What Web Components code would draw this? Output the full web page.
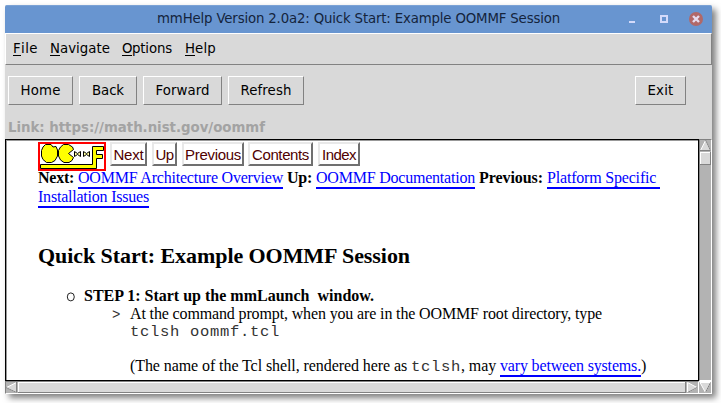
<!DOCTYPE html>
<html lang="en"><head><meta charset="utf-8"><title>mmHelp</title>
<style>html,body{height:403px}body{margin:0;background:#fff;overflow:hidden;display:flow-root}</style></head><body>
<help-window></help-window>
<script>
const define=(name,html,setup)=>customElements.define(name,class extends HTMLElement{
  connectedCallback(){
    if(this.shadowRoot)return;
    this.attachShadow({mode:'open'}).innerHTML=html;
    if(setup)setup(this,this.shadowRoot);
  }
});
// Single run of text spaced out to an exact advance width.
define('fit-text',`<style>:host{display:inline-block;white-space:pre;flex:none}</style><span><slot></slot></span>`,(el,root)=>{
  const w=+el.getAttribute('w'),s=root.querySelector('span');
  const n=el.textContent.length;
  if(n)s.style.letterSpacing=((w-s.getBoundingClientRect().width)/n)+'px';
  el.style.width=w+'px';
});
define('doc-link',`<style>:host{display:inline-block;color:#00f;height:18px;border-bottom:2px solid #00f;flex:none}</style><slot></slot>`);
define('tool-button',`<style>:host{box-sizing:border-box;display:flex;justify-content:center;height:29px;line-height:27px;border:1px solid;border-color:#fff #828282 #828282 #fff;flex:none}</style><slot></slot>`,el=>el.style.width=el.getAttribute('w')+'px');
define('nav-button',`<style>:host{box-sizing:border-box;display:flex;height:24px;font:15px/22px "Liberation Sans",Arial,sans-serif;color:#500000;border:2px solid;border-color:#e8e8e8 #707070 #707070 #e8e8e8;flex:none;justify-content:center}</style><slot></slot>`,el=>el.style.width=el.getAttribute('w')+'px');
define('oommf-logo',`<style>:host{display:block;width:68px;height:29px;flex:none;white-space:normal}svg{display:block}</style>
<svg width="68" height="29"><rect x="1" y="1" width="66" height="27" fill="#fff" stroke="#f00" stroke-width="2"/>
<g fill="#ff0" stroke="#000"><path d="M2.5 22.5H54.5V4.5H65.5V8.5H58.5V12.5H64.5V16.5H58.5V26.5H2.5Z"/>
<path d="M7.500 2.500H13L15 5L18 4.500L19.500 8V14L17 18.500L13.500 20.500H8.500L5 17.500L3.500 14V8.500L5 5Z"/>
<path d="M25.500 2.500H30.500L34.500 5L35.500 7.500L30.500 11.500L35.500 15.500L34 18.500L31 20.500H26L22.500 18L20.500 14V8.500L22.500 5Z"/>
<path fill="#ffffa0" d="M36.500 9.500L39.500 11.500L42.500 9.500V14.500L39.500 12.500L36.500 14.500ZM45.500 9.500L48.500 11.500L51.500 9.500V14.500L48.500 12.500L45.500 14.500Z"/></g></svg>`);
define('title-bar',`<style>:host{display:flex;height:28px;box-sizing:border-box;background:#6895d0;color:#14243c;padding-left:152px;line-height:25px;border-radius:2px 2px 0 0;border-top:1px solid #7ba2d5}svg{display:block;margin-left:67px}</style>
<fit-text w="403">mmHelp Version 2.0a2: Quick Start: Example OOMMF Session</fit-text>
<svg width="80" height="26"><path d="M2 15h6v2H2z" fill="#d3dafa"/><path d="M34 10h6v6h-6z" fill="none" stroke="#d3dafa" stroke-width="2"/><circle cx="69" cy="13" r="7" fill="#b16868"/><path d="M66 10l6 6M72 10l-6 6" stroke="#e6dcef" stroke-width="2.4"/></svg>`);
define('menu-bar',`<style>:host{display:flex;box-sizing:border-box;height:32px;gap:12px;padding:0 0 0 7px;line-height:30px;border:1px solid;border-color:#fff #828282 #828282 #fff}span{display:flex;flex:none}u{text-decoration:none;position:relative}u::after{content:"";position:absolute;left:0;right:0;top:21px;height:1px;background:#000}</style>
<span><u><fit-text w="8">F</fit-text></u><fit-text w="17">ile</fit-text></span>
<span><u><fit-text w="10">N</fit-text></u><fit-text w="50">avigate</fit-text></span>
<span><u><fit-text w="10">O</fit-text></u><fit-text w="40">ptions</fit-text></span>
<span style="margin-left:1px"><u><fit-text w="10">H</fit-text></u><fit-text w="21">elp</fit-text></span>`);
define('tool-bar',`<style>:host{display:flex;gap:6px;height:39px;padding:11px 26px 0 3px;box-sizing:border-box}.gap{flex:1}</style>
<tool-button w="65"><fit-text w="40">Home</fit-text></tool-button><tool-button w="58"><fit-text w="32">Back</fit-text></tool-button><tool-button w="79"><fit-text w="54">Forward</fit-text></tool-button><tool-button w="76"><fit-text w="51">Refresh</fit-text></tool-button><div class="gap"></div><tool-button w="51"><fit-text w="26">Exit</fit-text></tool-button>`);
define('link-status',`<style>:host{display:block;height:35px;box-sizing:border-box;padding:15px 0 0 3px;font-weight:bold;color:#a3a3a3;line-height:17px}</style><fit-text w="257">Link: https://math.nist.gov/oommf</fit-text>`);
define('help-page',`<style>
:host{display:block;box-sizing:border-box;background:#fff;border:1px solid #000;box-shadow:inset 1px 1px #999;padding:2px 0 0 32px;font:16px/18px "Liberation Serif","Times New Roman",serif;color:#000;overflow:hidden}
.r{display:flex;white-space:pre}.nav{align-items:flex-start}.nav oommf-logo{margin-right:4px}
h1{font-size:22px;line-height:26px;margin:36px 0 0;display:flex}
.l{height:19px;box-sizing:border-box}.tt{font-family:"Liberation Mono","Courier New",monospace;font-size:15.5px;color:#333}
ul{list-style:none;margin:0;padding:0}.step{padding:18px 0 0 28px}.body{padding-left:74px}
</style>
<div class="r nav"><oommf-logo></oommf-logo><nav-button w="37"><fit-text w="30">Next</fit-text></nav-button><nav-button w="25" style="margin-left:5px"><fit-text w="18">Up</fit-text></nav-button><nav-button w="62" style="margin-left:5px"><fit-text w="56">Previous</fit-text></nav-button><nav-button w="65" style="margin-left:4px"><fit-text w="57">Contents</fit-text></nav-button><nav-button w="42" style="margin-left:5px"><fit-text w="34">Index</fit-text></nav-button></div>
<div class="r l" style="margin-top:-2px"><b><fit-text w="40">Next: </fit-text></b><doc-link><fit-text w="205">OOMMF Architecture Overview</fit-text></doc-link><b style="margin-left:4px"><fit-text w="29">Up: </fit-text></b><doc-link><fit-text w="159">OOMMF Documentation</fit-text></doc-link><b style="margin-left:4px"><fit-text w="68">Previous: </fit-text></b><doc-link><fit-text w="113">Platform Specific </fit-text></doc-link></div>
<div class="r l"><doc-link><fit-text w="111">Installation Issues</fit-text></doc-link></div>
<h1><fit-text w="372">Quick Start: Example OOMMF Session</fit-text></h1>
<ul><li class="r step"><fit-text w="18"><svg width="9" height="10" style="display:block;margin-top:5px"><ellipse cx="4.8" cy="4.900" rx="3.500" ry="4" fill="none" stroke="#222"/></svg></fit-text><b><fit-text w="290">STEP 1: Start up the mmLaunch  window.</fit-text></b></li>
<li class="r body" style="align-items:baseline"><fit-text class="tt" w="18" style="font-size:14px">&gt;</fit-text><fit-text w="472">At the command prompt, when you are in the OOMMF root directory, type</fit-text></li>
<li class="r tt" style="padding-left:92px;height:17px;line-height:16px"><fit-text w="150">tclsh oommf.tcl</fit-text></li>
<li class="r" style="padding:16px 0 0 92px;align-items:baseline"><fit-text w="281">(The name of the Tcl shell, rendered here as </fit-text><fit-text class="tt" w="50">tclsh</fit-text><fit-text w="39">, may </fit-text><doc-link><fit-text w="141">vary between systems.</fit-text></doc-link><fit-text w="5">)</fit-text></li></ul>`);
define('v-scroll',`<style>:host{display:block;background:#b3b3b3;box-sizing:border-box;border:1px solid;border-color:#828282 #fff #fff #828282;width:13px}svg{display:block}</style>
<svg width="11" height="240"><path d="M5.500 .5L.5 10.500H10.500Z" fill="#d9d9d9" stroke="#fff"/><path d="M5.500 0L10.500 10.500H0" fill="none" stroke="#828282"/><path d="M0 12h11v13H0z" fill="#828282"/><path d="M0 12h10v12H0z" fill="#fff"/><path d="M1 13h9v11H1z" fill="#d9d9d9"/></svg>`);
define('h-scroll',`<style>:host{display:block;background:#b3b3b3;border:1px solid;border-color:#828282 #fff #fff #828282;box-sizing:border-box;height:13px}svg{display:block}</style>
<svg width="692" height="11"><path d="M.5 5.500L10.500 .5V10.500Z" fill="#d9d9d9" stroke="#fff"/><path d="M0 5.500L10.500 10.500V0" fill="none" stroke="#828282"/><path d="M12 0h668v11H12z" fill="#828282"/><path d="M12 0h667v10H12z" fill="#fff"/><path d="M13 1h666v9H13z" fill="#d9d9d9"/><path d="M681.500 .5V10.500L691 5.500Z" fill="#d9d9d9" stroke="#fff"/><path d="M681.500 10.500L691 5.500" stroke="#828282"/></svg>`);
define('scroll-corner',`<style>:host{display:block;background:#b3b3b3;box-sizing:border-box;border:solid #fff;border-width:1px 1px 1px 0}svg{display:block}</style><svg width="12" height="11"><path d="M1 .5H11.500L6.500 10.500Z" fill="#d9d9d9" stroke="#fff"/><path d="M11.500 .5L6.500 10.500" stroke="#828282"/></svg>`);
define('help-window',`<style>:host{display:block;width:707px;height:389px;margin:5px 0 0 5px;background:#d9d9d9;font:13.33px/17px "DejaVu Sans",sans-serif;color:#000;box-shadow:4px 4px 6px 0 rgba(0,0,0,.5);border-radius:2px 2px 0 0}
main{display:grid;grid-template:242px 13px/694px 13px}v-scroll{height:242px}</style>
<title-bar></title-bar><menu-bar></menu-bar><tool-bar></tool-bar><link-status></link-status><main><help-page></help-page><v-scroll></v-scroll><h-scroll></h-scroll><scroll-corner></scroll-corner></main>`);
</script></body></html>
